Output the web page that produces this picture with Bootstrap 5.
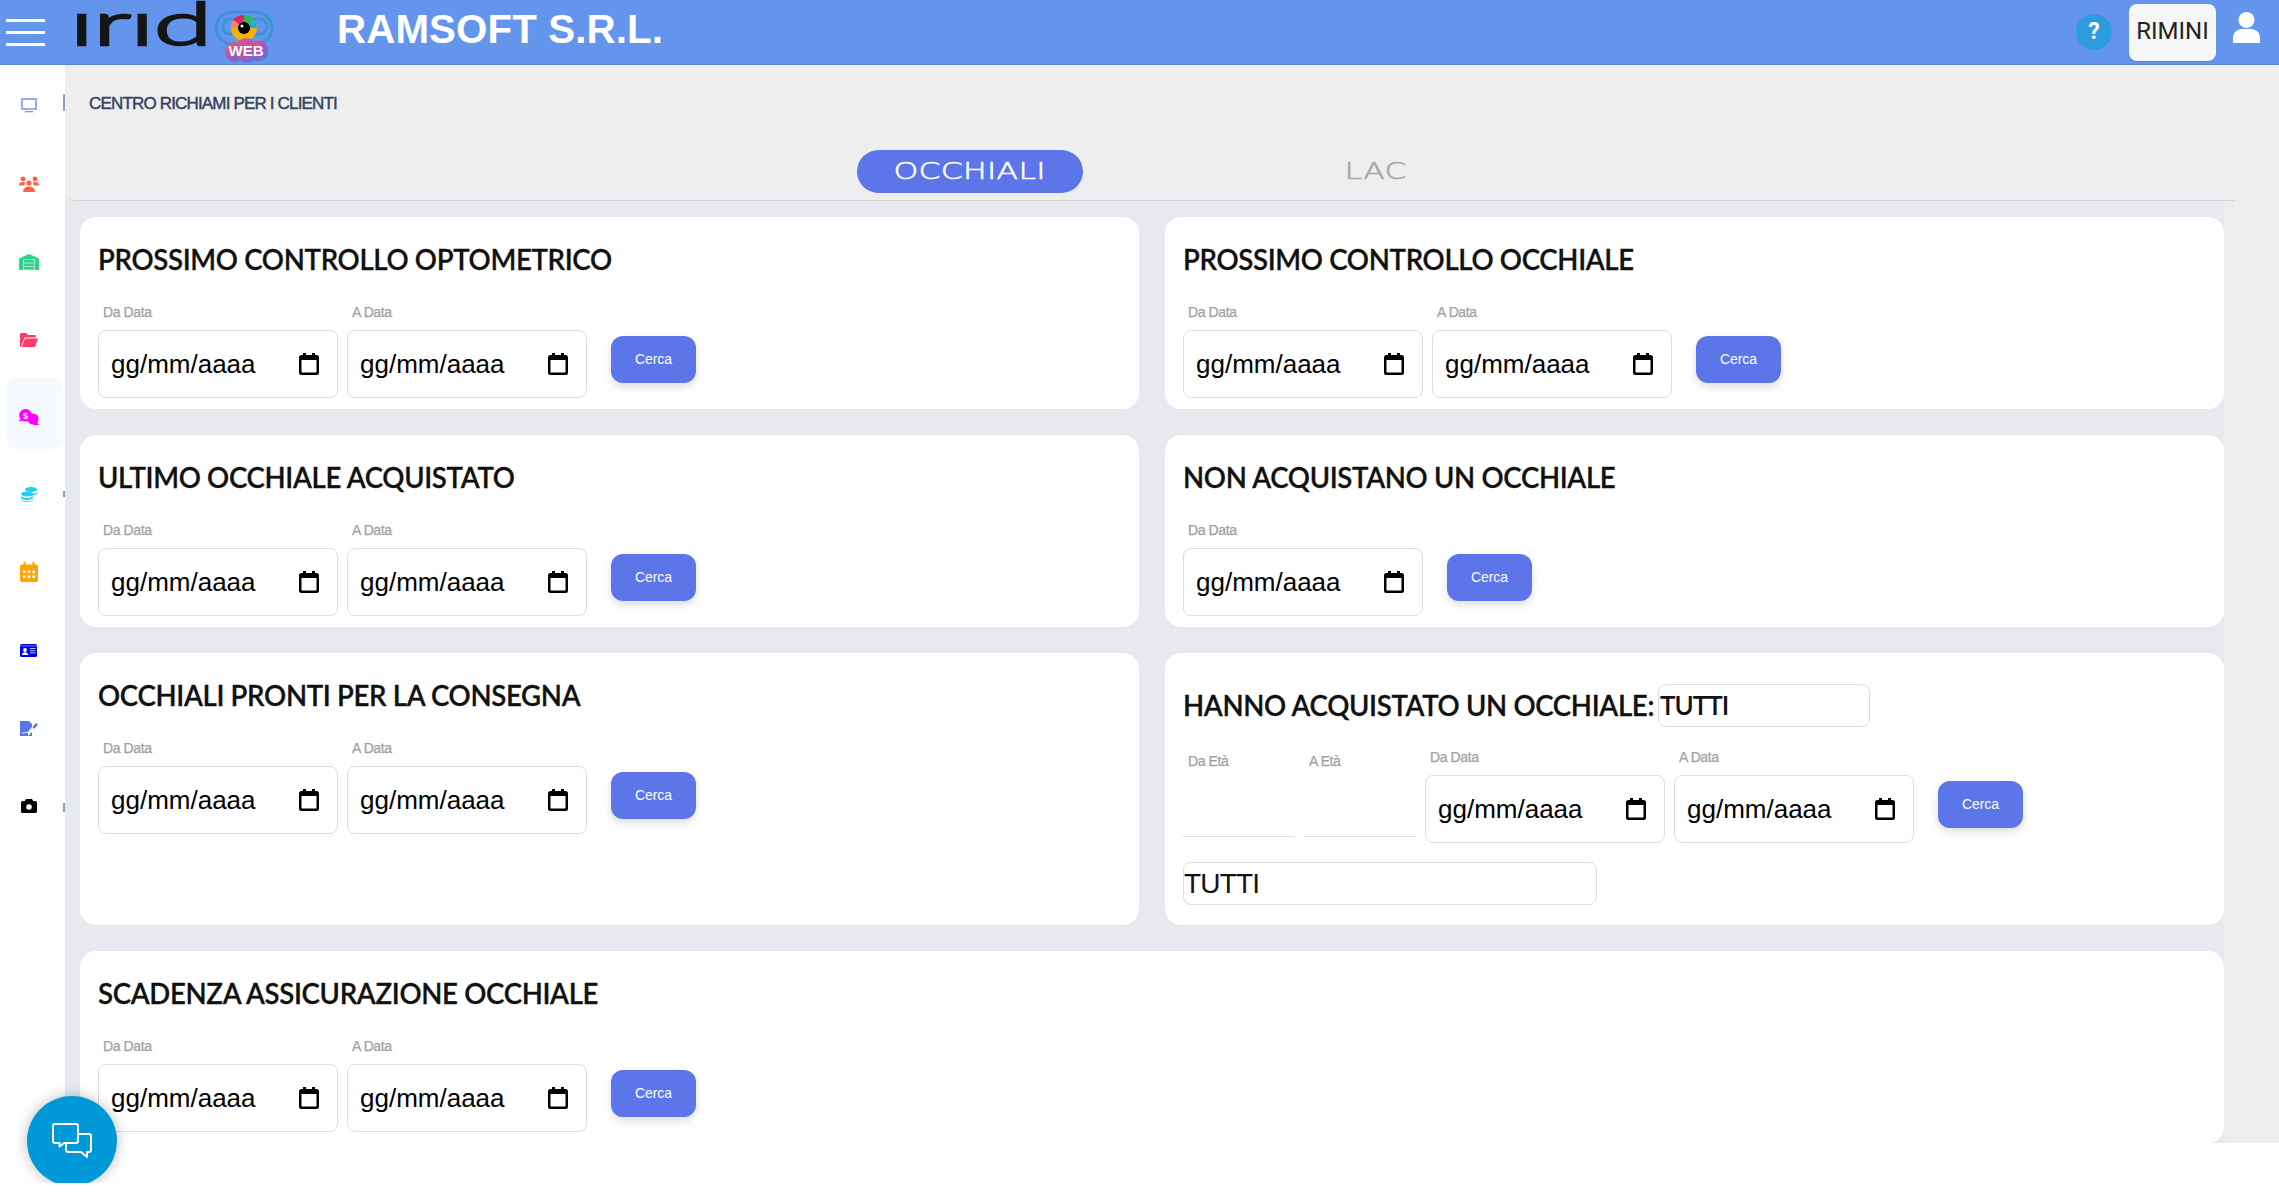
<!DOCTYPE html>
<html lang="it">
<head>
<meta charset="utf-8">
<title>Centro richiami</title>
<link href="https://cdn.jsdelivr.net/npm/bootstrap@5.3.0/dist/css/bootstrap.min.css" rel="stylesheet">
<style>
html,body{margin:0;background:#fff;overflow:hidden}
.app-root{position:relative;height:1183px;overflow:hidden;font-family:"Liberation Sans",sans-serif}
.top-bar{height:65px;background:#6495ed;border-bottom:1px solid #5a86d6;color:#fff}
.burger{width:39px;margin-left:6px;flex:none;background:none;border:0;padding:0}
.burger i{display:block;height:3px;background:#fff;margin:9px 0}
.logo-svg{margin-left:10px;flex:none;width:225px;height:65px}
.brand-name{font-size:40.3px;font-weight:700;margin:0 0 0 57px;line-height:1;padding-bottom:3px;letter-spacing:.1px}
.help-dot{width:36px;height:36px;border-radius:50%;background:#2d9cdf;color:#fff;font-weight:700;font-size:23px;line-height:36px;text-align:center;font-family:Roboto,sans-serif}
.shop-box{width:87px;height:57px;margin-left:17px;background:#f6f6f6;border-radius:8px;color:#222;font:400 24px/55px Roboto,sans-serif;text-align:center;box-shadow:0 1px 1px #0002}
.user-ico{margin:0 19px 0 17px;width:27px;height:31px;margin-bottom:10px}
.rail{width:65px;flex:none;background:#fff}
.rail-item{height:78px;display:flex;align-items:center;justify-content:center;padding-right:8px;position:relative}
.rail-item.nudge-s{padding-top:2px}
.rail-item.nudge-m{padding-top:4px}
.rail-item svg{position:relative;z-index:1}
.rail-item.is-on::before{content:"";position:absolute;left:6px;right:2px;top:1px;bottom:6px;background:#f6f9ff;border-radius:10px}
.rail-frag{position:absolute;left:63px;width:2px;background:#8fa0c4;height:6px;top:36px}
.work{flex:1 1 auto;height:1078px;background:#eee}
.strip{background:#eee;padding-left:3px;height:136px;width:2170px}
.strip-in{border-bottom:1px solid #d3d3d6;width:2167px;height:136px;padding-top:31px;border-radius:0 0 0 6px}
.crumb{font:400 17px/16px "Liberation Sans",sans-serif;letter-spacing:-.83px;-webkit-text-stroke:.45px #34425f;color:#34425f;margin:0 0 38px 21px}
.tab-row{margin-left:789px;gap:180px}
.tab-row .nav-link{width:226px;height:43px;padding:0;border-radius:22px;text-align:center;line-height:43px;color:#a8a8a8;font-family:"DejaVu Sans",sans-serif;font-weight:200;font-size:23px;background:none;-webkit-text-stroke:.55px currentColor}
.tab-row .nav-link.active{background:#5c75e8;color:#fff}
.tab-row span{display:inline-block;transform:scaleX(1.37);letter-spacing:.2px}
.grid-zone{background:#e8e9ee;padding:16px 0 1px 15px;border-right:11px solid #efecef;height:942px;width:2170px}
.grid-row{--bs-gutter-x:26px;--bs-gutter-y:26px}
.pane{min-height:192px;border:0;border-radius:16px;padding:25px 18px 11px;height:100%;background:#fff}
.pane-title{font:600 29px/34px Lato,sans-serif;letter-spacing:-.33px;color:#111;margin:0 0 28px;-webkit-text-stroke:.3px #111;white-space:nowrap;transform:scaleX(.95);transform-origin:0 50%}
.fld-row{display:flex;gap:9px}
.fld-cap{display:block;font:400 14px/16px "Liberation Sans",sans-serif;color:#a0a0a0;margin:0 0 10px 5px;letter-spacing:-.4px;-webkit-text-stroke:.25px #a0a0a0}
.date-box{width:240px;height:68px;display:flex;align-items:center;justify-content:space-between;padding:0 18px 0 12px;border:1px solid #ddd;border-radius:8px;background:#fff;font:400 26px/1 "Liberation Sans",sans-serif;color:#000}
.go-btn{width:85px;height:47px;padding:0;margin:0 0 15px 15px;align-self:flex-end;background:#5c75e8;border:0;border-radius:12px;color:#fff;font:400 14px/47px "Liberation Sans",sans-serif;letter-spacing:-.1px;box-shadow:0 4px 8px #0002}
.go-btn:hover{background:#5c75e8}
.pane-wide{padding:32px 18px 20px}
.title-line{display:flex;align-items:center;margin-bottom:21px;height:43px}
.title-line .pane-title{margin:0;flex:0 0 475px;width:475px;min-width:0;position:relative;top:-2px}
.mini-pick{width:212px;height:43px;border:1px solid #ddd;border-radius:8px;font:600 26px/41px Lato,sans-serif;letter-spacing:-1px;color:#111;background:#fff;padding-left:1px;position:relative;top:-1px}
.age-fld{width:112px}
.age-fld .fld-cap{padding-top:4px}
.age-in{height:58px;border:0;border-bottom:1px solid #ddd;border-radius:0;background:none;padding:0}
.wide-pick{width:414px;height:43px;margin-top:19px;border:1px solid #ddd;border-radius:8px;font:400 28px/41px "Liberation Sans",sans-serif;letter-spacing:-.8px;color:#111}
.chat-fab{position:absolute;left:27px;top:1096px;width:90px;height:90px;border-radius:50%;background:#0098d7;border:0;padding:0;box-shadow:0 0 14px #0004}
</style>
</head>
<body>
<svg width="0" height="0" class="d-none" aria-hidden="true">
<symbol id="cal" viewBox="0 0 20 22"><path d="M4 0h3v2h6V0h3v2h1.500A2.500 2.500 0 0 1 20 4.500v15a2.500 2.500 0 0 1-2.500 2.500h-15A2.500 2.500 0 0 1 0 19.500v-15A2.500 2.500 0 0 1 2.500 2H4zM2.500 7v12c0 .3.200.5.500.5h14c.3 0 .5-.2.500-.5V7z" fill="#000"/></symbol>
</svg>
<div class="app-root">
  <header class="top-bar d-flex align-items-center">
    <button class="burger" aria-label="menu"><i></i><i></i><i></i></button>
    <svg class="logo-svg" viewBox="0 0 225 65">
      <defs>
        <linearGradient id="cl" x1="0" x2="1" y1="0" y2="1"><stop offset="0" stop-color="#f25f4c"/><stop offset=".5" stop-color="#b14fc0"/><stop offset="1" stop-color="#2f8fd8"/></linearGradient>
      </defs>
      <text x="15" y="45" font-family="Lato,sans-serif" font-weight="300" font-size="60" textLength="142" lengthAdjust="spacingAndGlyphs" fill="#151515" stroke="#151515" stroke-width="2.400">ırıd</text>
      <rect x="161" y="12" width="56" height="32" rx="16" fill="none" stroke="#3a93d6" stroke-width="3"/>
      <rect x="168" y="19" width="44" height="15" rx="7" fill="none" stroke="#3a93d6" stroke-width="3"/>
      <g transform="translate(5 0)">
      <circle cx="184" cy="28" r="13" fill="#f0b400"/>
      <path d="M184 28L173 20A13 13 0 0 1 184 15Z" fill="#e0256f"/>
      <path d="M184 28V15A13 13 0 0 1 195 20Z" fill="#2fb85c"/>
      <path d="M184 28L195 20A13 13 0 0 1 197 28Z" fill="#29a8e0"/>
      <path d="M184 28H171A13 13 0 0 1 173 20Z" fill="#f28a5a"/>
      <circle cx="184" cy="28" r="6" fill="#000"/><circle cx="182" cy="26" r="1.500" fill="#fff"/>
      <g fill="url(#cl)"><circle cx="175" cy="52" r="10"/><circle cx="186" cy="48" r="10"/><circle cx="198" cy="51" r="10.500"/><circle cx="187" cy="54" r="9"/></g>
      <text x="186" y="55.500" text-anchor="middle" font-family="'Liberation Sans',sans-serif" font-weight="700" font-size="15" fill="#fff">WEB</text>
      </g>
    </svg>
    <h1 class="brand-name">RAMSOFT S.R.L.</h1>
    <div class="ms-auto d-flex align-items-center">
      <div class="help-dot">?</div>
      <div class="shop-box">RIMINI</div>
      <svg class="user-ico" viewBox="0 0 27 31"><circle cx="13.500" cy="8" r="8" fill="#fff"/><path d="M0 31v-5c0-5.500 4-9 9-9h9c5 0 9 3.500 9 9v5z" fill="#fff"/></svg>
    </div>
  </header>
  <div class="d-flex">
    <nav class="rail">
      <div class="rail-item nudge-s"><svg width="16" height="15" viewBox="0 0 16 15"><rect x="1" y="1" width="14" height="10" fill="none" stroke="#7c90e8" stroke-width="1.500"/><rect x="4" y="13" width="8" height="1.300" fill="#7c90e8"/></svg><span class="rail-frag" style="top:29px;height:17px"></span></div>
      <div class="rail-item nudge-m"><svg width="20" height="16" viewBox="0 0 20 16" fill="#ff6347"><circle cx="4" cy="3" r="2.400"/><circle cx="16" cy="3" r="2.400"/><circle cx="10" cy="7" r="2.600"/><path d="M0 9c0-2 1.500-3 4-3 1 0 1.800.2 2.400.6C5.500 7.500 5.300 8.500 5.600 9.500L0 9.500zM20 9c0-2-1.500-3-4-3-1 0-1.800.2-2.400.6.900.9 1.100 1.900.8 2.900l5.600 0zM4 16c0-3 2-5.500 6-5.500s6 2.500 6 5.500z"/></svg></div>
      <div class="rail-item nudge-m"><svg width="20" height="16" viewBox="0 0 20 16"><path d="M0 16V4.500L10 0l10 4.500V16z" fill="#2bd48a"/><g fill="none" stroke="#a9eecf" stroke-width="1"><path d="M4.500 5.500h11v10.500h-11zM4.500 9h11M4.500 12.500h11"/></g></svg></div>
      <div class="rail-item nudge-m"><svg width="18" height="14" viewBox="0 0 18 14" fill="#ff3b6b"><path d="M0 14V1.500C0 .7.700 0 1.500 0H6l2 2h6.500c.8 0 1.200.6 1.200 1.300V4.500H4.500L1.200 13z"/><path d="M5 5.500h13L15 14H1.700z"/></svg></div>
      <div class="rail-item is-on nudge-s"><svg width="20" height="16" viewBox="0 0 20 16" fill="#ff00ff"><circle cx="6.500" cy="6.300" r="6.300"/><path d="M1 10l-1 2.500 4-1z"/><circle cx="14" cy="10" r="5.500"/><path d="M18 13l2 3h-6z"/><text x="6.500" y="9.500" text-anchor="middle" font-size="9" font-weight="700" font-family="'Liberation Sans',sans-serif" fill="#fff">$</text></svg></div>
      <div class="rail-item"><span class="rail-frag"></span><svg width="16" height="15" viewBox="0 0 16 15" fill="#1fcff5"><ellipse cx="10" cy="2.500" rx="6" ry="2.500"/><path d="M16 4.500c0 1.400-2.700 2.500-6 2.500S4 5.900 4 4.500V6c0 1.400 2.700 2.500 6 2.500s6-1.100 6-2.500z"/><ellipse cx="6" cy="7" rx="6" ry="2.500"/><path d="M0 8.500V10.500c0 1.400 2.700 2.500 6 2.500s6-1.100 6-2.500V8.500c0 1.400-2.700 2.500-6 2.500S0 9.900 0 8.500z"/><path d="M0 12v.5C0 13.900 2.700 15 6 15s6-1.100 6-2.500V12c0 1.400-2.700 2.200-6 2.200S0 13.400 0 12z"/></svg></div>
      <div class="rail-item"><svg width="18" height="20" viewBox="0 0 18 20"><path d="M3.500 0h2v2.500h7V0h2v2.500H16a2 2 0 0 1 2 2V18a2 2 0 0 1-2 2H2a2 2 0 0 1-2-2V4.500a2 2 0 0 1 2-2h1.500z" fill="#ffa500"/><g fill="#fff"><rect x="3" y="8.500" width="2.600" height="2.600"/><rect x="7.700" y="8.500" width="2.600" height="2.600"/><rect x="12.400" y="8.500" width="2.600" height="2.600"/><rect x="3" y="13.500" width="2.600" height="2.600"/><rect x="7.700" y="13.500" width="2.600" height="2.600"/><rect x="12.400" y="13.500" width="2.600" height="2.600"/></g></svg></div>
      <div class="rail-item"><svg width="17" height="13" viewBox="0 0 17 13"><rect width="17" height="13" rx="1.500" fill="#0000e6"/><rect x="0" y="1.500" width="17" height=".8" fill="#8f8ff5"/><circle cx="5" cy="6" r="1.900" fill="#fff"/><path d="M2 11c0-2 1.300-2.800 3-2.800s3 .8 3 2.800z" fill="#fff"/><path d="M10 4.500h5.500M10 6.700h5.500M10 8.900h5.500" stroke="#b9b9fb" stroke-width="1"/></svg></div>
      <div class="rail-item"><svg width="18" height="15" viewBox="0 0 18 15"><path d="M0 0h9l3 3v3L8 11v4H0z" fill="#5c75e8"/><path d="M12 11v4H8z" fill="#5c75e8"/><path d="M2 12.500c1.500-1.500 2 0 3-1s1.500 1 3 0l7-8 2 1.500-8 8" fill="none" stroke="#fff" stroke-width="1"/><path d="M12.500 6L16 2l2 1.500-4 4.500z" fill="#5c75e8"/></svg></div>
      <div class="rail-item"><span class="rail-frag" style="height:9px"></span><svg width="16" height="14" viewBox="0 0 16 14"><path d="M5 0h6l1.200 2H14.500A1.500 1.500 0 0 1 16 3.500v9a1.500 1.500 0 0 1-1.500 1.500h-13A1.500 1.500 0 0 1 0 12.500v-9A1.500 1.500 0 0 1 1.500 2h2.300z" fill="#000"/><circle cx="8" cy="8" r="2.800" fill="#fff"/></svg></div>
    </nav>
    <main class="work">
      <div class="strip">
        <div class="strip-in">
          <p class="crumb">CENTRO RICHIAMI PER I CLIENTI</p>
          <ul class="nav tab-row">
            <li class="nav-item"><a class="nav-link active" href="#"><span>OCCHIALI</span></a></li>
            <li class="nav-item"><a class="nav-link" href="#"><span>LAC</span></a></li>
          </ul>
        </div>
      </div>
      <div class="grid-zone">
        <div class="row grid-row">
          <div class="col-6"><section class="card pane">
            <h2 class="pane-title">PROSSIMO CONTROLLO OPTOMETRICO</h2>
            <div class="fld-row">
              <div><label class="fld-cap">Da Data</label><div class="date-box">gg/mm/aaaa<svg width="20" height="22"><use href="#cal"/></svg></div></div>
              <div><label class="fld-cap">A Data</label><div class="date-box">gg/mm/aaaa<svg width="20" height="22"><use href="#cal"/></svg></div></div>
              <button class="btn go-btn">Cerca</button>
            </div>
          </section></div>
          <div class="col-6"><section class="card pane">
            <h2 class="pane-title">PROSSIMO CONTROLLO OCCHIALE</h2>
            <div class="fld-row">
              <div><label class="fld-cap">Da Data</label><div class="date-box">gg/mm/aaaa<svg width="20" height="22"><use href="#cal"/></svg></div></div>
              <div><label class="fld-cap">A Data</label><div class="date-box">gg/mm/aaaa<svg width="20" height="22"><use href="#cal"/></svg></div></div>
              <button class="btn go-btn">Cerca</button>
            </div>
          </section></div>
          <div class="col-6"><section class="card pane">
            <h2 class="pane-title">ULTIMO OCCHIALE ACQUISTATO</h2>
            <div class="fld-row">
              <div><label class="fld-cap">Da Data</label><div class="date-box">gg/mm/aaaa<svg width="20" height="22"><use href="#cal"/></svg></div></div>
              <div><label class="fld-cap">A Data</label><div class="date-box">gg/mm/aaaa<svg width="20" height="22"><use href="#cal"/></svg></div></div>
              <button class="btn go-btn">Cerca</button>
            </div>
          </section></div>
          <div class="col-6"><section class="card pane">
            <h2 class="pane-title">NON ACQUISTANO UN OCCHIALE</h2>
            <div class="fld-row">
              <div><label class="fld-cap">Da Data</label><div class="date-box">gg/mm/aaaa<svg width="20" height="22"><use href="#cal"/></svg></div></div>
              <button class="btn go-btn">Cerca</button>
            </div>
          </section></div>
          <div class="col-6"><section class="card pane">
            <h2 class="pane-title">OCCHIALI PRONTI PER LA CONSEGNA</h2>
            <div class="fld-row">
              <div><label class="fld-cap">Da Data</label><div class="date-box">gg/mm/aaaa<svg width="20" height="22"><use href="#cal"/></svg></div></div>
              <div><label class="fld-cap">A Data</label><div class="date-box">gg/mm/aaaa<svg width="20" height="22"><use href="#cal"/></svg></div></div>
              <button class="btn go-btn">Cerca</button>
            </div>
          </section></div>
          <div class="col-6"><section class="card pane pane-wide">
            <div class="title-line"><h2 class="pane-title">HANNO ACQUISTATO UN OCCHIALE:</h2><div class="mini-pick">TUTTI</div></div>
            <div class="fld-row">
              <div class="age-fld"><label class="fld-cap">Da Età</label><div class="age-in"></div></div>
              <div class="age-fld"><label class="fld-cap">A Età</label><div class="age-in"></div></div>
              <div><label class="fld-cap">Da Data</label><div class="date-box">gg/mm/aaaa<svg width="20" height="22"><use href="#cal"/></svg></div></div>
              <div><label class="fld-cap">A Data</label><div class="date-box">gg/mm/aaaa<svg width="20" height="22"><use href="#cal"/></svg></div></div>
              <button class="btn go-btn">Cerca</button>
            </div>
            <div class="wide-pick">TUTTI</div>
          </section></div>
          <div class="col-12"><section class="card pane">
            <h2 class="pane-title">SCADENZA ASSICURAZIONE OCCHIALE</h2>
            <div class="fld-row">
              <div><label class="fld-cap">Da Data</label><div class="date-box">gg/mm/aaaa<svg width="20" height="22"><use href="#cal"/></svg></div></div>
              <div><label class="fld-cap">A Data</label><div class="date-box">gg/mm/aaaa<svg width="20" height="22"><use href="#cal"/></svg></div></div>
              <button class="btn go-btn">Cerca</button>
            </div>
          </section></div>
        </div>
      </div>
    </main>
  </div>
  <button class="chat-fab" aria-label="chat">
    <svg width="40" height="36" viewBox="0 0 40 36" fill="none" stroke="#fff" stroke-width="2" stroke-linejoin="round"><path d="M3 1h21a2 2 0 0 1 2 2v15a2 2 0 0 1-2 2H12l-4.500 3.500V20H3a2 2 0 0 1-2-2V3a2 2 0 0 1 2-2z" fill="#0098d7"/><path d="M26 11h11a2 2 0 0 1 2 2v14a2 2 0 0 1-2 2h-2v5l-6-5H16a2 2 0 0 1-2-2v-7" fill="#0098d7"/><path d="M26 11v7a2 2 0 0 1-2 2H14"/></svg>
  </button>
</div>
<script src="https://cdn.jsdelivr.net/npm/bootstrap@5.3.0/dist/js/bootstrap.bundle.min.js"></script>
</body>
</html>
